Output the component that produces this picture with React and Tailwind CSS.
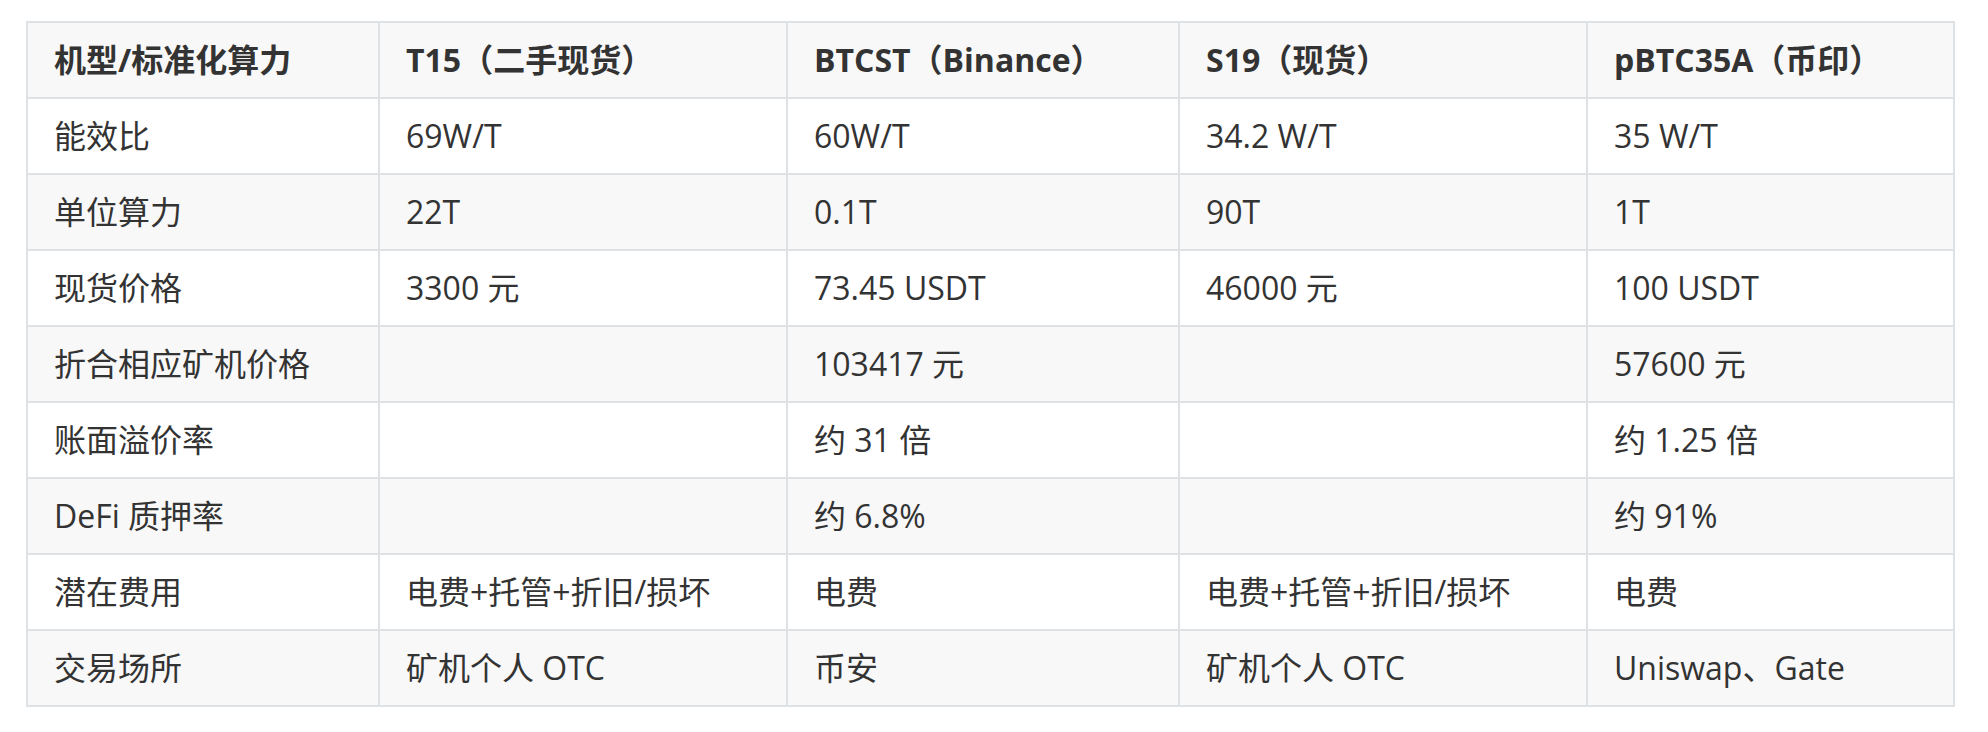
import React from "react";

const header = [
  "机型/标准化算力",
  "T15（二手现货）",
  "BTCST（Binance）",
  "S19（现货）",
  "pBTC35A（币印）",
];

const rows = [
  ["能效比", "69W/T", "60W/T", "34.2 W/T", "35 W/T"],
  ["单位算力", "22T", "0.1T", "90T", "1T"],
  ["现货价格", "3300 元", "73.45 USDT", "46000 元", "100 USDT"],
  ["折合相应矿机价格", "", "103417 元", "", "57600 元"],
  ["账面溢价率", "", "约 31 倍", "", "约 1.25 倍"],
  ["DeFi 质押率", "", "约 6.8%", "", "约 91%"],
  ["潜在费用", "电费+托管+折旧/损坏", "电费", "电费+托管+折旧/损坏", "电费"],
  ["交易场所", "矿机个人 OTC", "币安", "矿机个人 OTC", "Uniswap、Gate"],
];

const widths = ["w-[352px]", "w-[408px]", "w-[392px]", "w-[408px]", "w-[367px]"];

const cell =
  "border-2 border-[#dfe2e5] px-[26px] py-[12px] leading-[50px] text-left align-middle whitespace-nowrap";

export default function App() {
  return (
    <div className="min-h-screen bg-white pt-[21px] pl-[26px] font-['Open_Sans','Noto_Sans_CJK_SC',sans-serif] text-[32px] text-[#333333]">
      <table className="w-[1929px] table-fixed border-collapse">
        <colgroup>
          {widths.map((w, i) => (
            <col key={i} className={w} />
          ))}
        </colgroup>
        <thead>
          <tr className="bg-[#f8f8f8]">
            {header.map((h, i) => (
              <th key={i} className={`${cell} font-bold`}>
                {h}
              </th>
            ))}
          </tr>
        </thead>
        <tbody>
          {rows.map((r, ri) => (
            <tr key={ri} className={ri % 2 === 1 ? "bg-[#f8f8f8]" : "bg-white"}>
              {r.map((c, ci) => (
                <td key={ci} className={cell}>
                  {c}
                </td>
              ))}
            </tr>
          ))}
        </tbody>
      </table>
    </div>
  );
}
